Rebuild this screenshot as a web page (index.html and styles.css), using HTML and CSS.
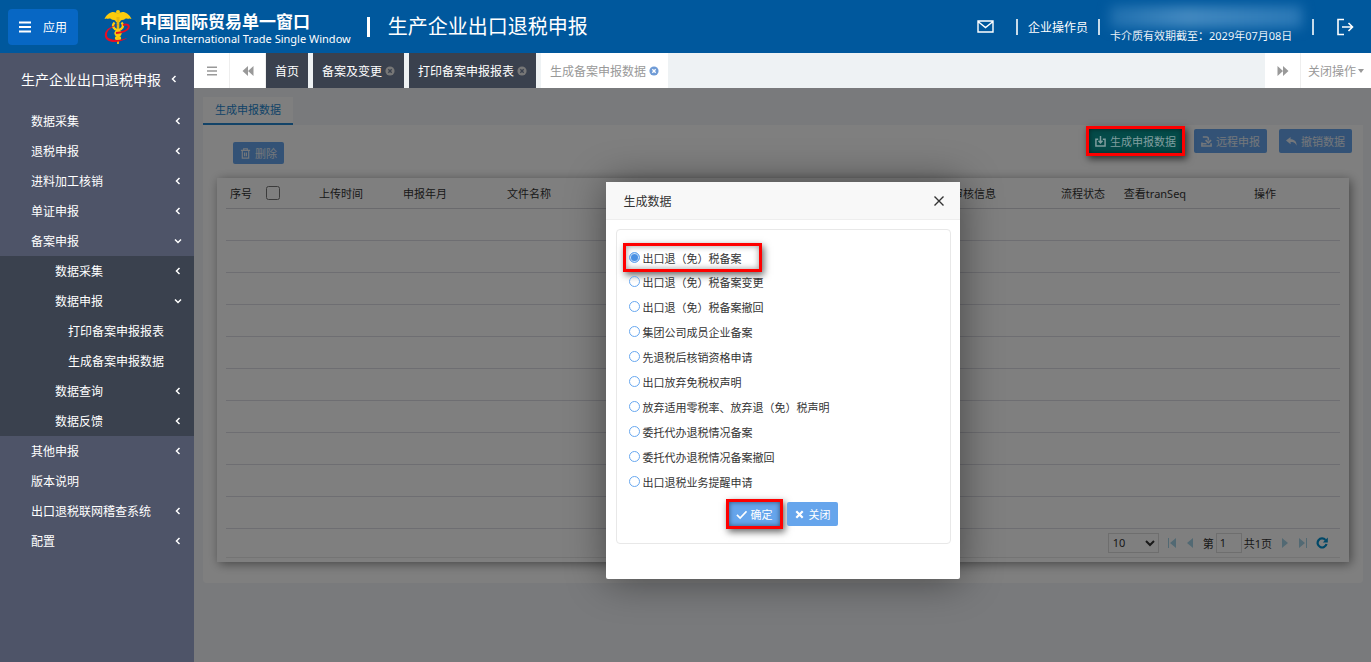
FILE: index.html
```html
<!DOCTYPE html>
<html lang="zh-CN">
<head>
  <title>生产企业出口退税申报</title>
  <meta charset="UTF-8">
  <link rel="stylesheet" href="styles.css">
</head>
<body>
  <!-- Icon sprite -->
  <svg class="sprite" aria-hidden="true">
    <symbol id="i-left" viewBox="0 0 8 8"><path d="M5.5 1 2.5 4l3 3" fill="none" stroke="currentColor" stroke-width="1.5"/></symbol>
    <symbol id="i-down" viewBox="0 0 8 8"><path d="M1 2.5l3 3 3-3" fill="none" stroke="currentColor" stroke-width="1.5"/></symbol>
    <symbol id="i-bars" viewBox="0 0 12 12"><path d="M0 1.5h12M0 6h12M0 10.5h12" stroke="currentColor" stroke-width="1.8"/></symbol>
    <symbol id="i-back" viewBox="0 0 12 12"><path d="M6 1v10L.5 6zM11.500 1v10L6 6z" fill="currentColor"/></symbol>
    <symbol id="i-forward" viewBox="0 0 12 12"><path d="M.5 1v10L6 6zM6 1v10l5.500-5z" fill="currentColor"/></symbol>
    <symbol id="i-close" viewBox="0 0 12 12"><circle cx="6" cy="6" r="5.500" fill="currentColor"/><path d="M4 4l4 4M8 4 4 8" stroke="var(--cross)" stroke-width="1.6"/></symbol>
  </svg>

  <header class="header">
    <button class="app-btn"><svg class="icon-m"><use href="#i-bars"/></svg>应用</button>
    <a class="brand" href="#">
      <svg class="logo" viewBox="0 0 28 36" aria-hidden="true">
        <circle cx="14" cy="3" r="2" fill="#fccb0c"/>
        <path d="M14 5C11 1.500 4 2 .5 10c2-1 3-.5 3.500 0 1.500-.8 3-.5 4 .8 2-.3 3.500.5 4 2.200h4c.5-1.700 2-2.500 4-2.200 1-1.300 2.500-1.600 4-.8.5-.5 1.500-1 3.500 0C24 2 17 1.500 14 5z" fill="#fccb0c"/>
        <path d="M12.500 8h3l-.6 27h-1.800z" fill="#e8b80e"/>
        <path d="M10.500 13.500c-2 2-2 5 .5 6.500s5.500 2 5.500 4.500-4.500 2.500-4.500 4.500 2 2 2.500 3M17.500 13.500c2 2 2 5-.5 6.500s-5.500 2-5.500 4.500 4.500 2.500 4.500 4.500-2 2-2.500 3" fill="none" stroke="#fccb0c" stroke-width="2.400"/>
        <path d="M19 16c4-1.500 6.500 0 5.500 2.800C23 22 18 23.500 12 24" fill="none" stroke="#e60d24" stroke-width="2"/>
        <path d="M15 15.500C8 16.500 1 20 .8 26c-.1 5 5 7.500 11 7 5-.4 8.500-2 11.500-4-5 1.600-9 2.300-13 1.800C5 30 2.500 28.500 3 25c.5-4 5-7.500 12-9.500z" fill="#e60d24"/>
      </svg>
      <span class="brand-text">
        <strong>中国国际贸易单一窗口</strong>
        <span>China International Trade Single Window</span>
      </span>
    </a>
    <i class="bar bar-big"></i>
    <h1>生产企业出口退税申报</h1>
    <div class="user">
      <a href="#" aria-label="消息"><svg class="icon-mail" viewBox="0 0 17 13"><path d="M1 1h15v11H1zM1 1.500 8.500 7.500 16 1.500" fill="none" stroke="currentColor" stroke-width="1.400"/></svg></a>
      <i class="bar bar-mail"></i>
      <span class="role">企业操作员</span>
      <i class="bar"></i>
      <div class="card-info">
        <div class="masked"></div>
        <span>卡介质有效期截至：2029年07月08日</span>
      </div>
      <i class="bar"></i>
      <a class="logout" href="#" aria-label="退出"><svg class="icon-out" viewBox="0 0 18 18"><path d="M8 1.500H2v15h6M6 9h10M12.500 5l4 4-4 4" fill="none" stroke="currentColor" stroke-width="1.600"/></svg></a>
    </div>
  </header>

  <div class="layout">
    <nav class="sidebar">
      <a class="side-title" href="#">生产企业出口退税申报<svg class="chev"><use href="#i-left"/></svg></a>
      <a href="#">数据采集<svg class="chev"><use href="#i-left"/></svg></a>
      <a href="#">退税申报<svg class="chev"><use href="#i-left"/></svg></a>
      <a href="#">进料加工核销<svg class="chev"><use href="#i-left"/></svg></a>
      <a href="#">单证申报<svg class="chev"><use href="#i-left"/></svg></a>
      <a href="#">备案申报<svg class="chev"><use href="#i-down"/></svg></a>
      <div class="submenu">
        <a href="#">数据采集<svg class="chev"><use href="#i-left"/></svg></a>
        <a href="#">数据申报<svg class="chev"><use href="#i-down"/></svg></a>
        <a class="leaf" href="#">打印备案申报报表</a>
        <a class="leaf" href="#">生成备案申报数据</a>
        <a href="#">数据查询<svg class="chev"><use href="#i-left"/></svg></a>
        <a href="#">数据反馈<svg class="chev"><use href="#i-left"/></svg></a>
      </div>
      <a href="#">其他申报<svg class="chev"><use href="#i-left"/></svg></a>
      <a href="#">版本说明</a>
      <a href="#">出口退税联网稽查系统<svg class="chev"><use href="#i-left"/></svg></a>
      <a href="#">配置<svg class="chev"><use href="#i-left"/></svg></a>
    </nav>

    <main class="main">
      <div class="tabbar">
        <button class="tab-tool" aria-label="收起菜单"><svg class="icon-s"><use href="#i-bars"/></svg></button>
        <button class="tab-tool" aria-label="向左"><svg class="icon-m"><use href="#i-back"/></svg></button>
        <div class="tabs">
          <a href="#">首页</a>
          <a href="#">备案及变更<svg class="icon-x"><use href="#i-close"/></svg></a>
          <a href="#">打印备案申报报表<svg class="icon-x"><use href="#i-close"/></svg></a>
          <a class="active" href="#">生成备案申报数据<svg class="icon-x"><use href="#i-close"/></svg></a>
        </div>
        <button class="tab-tool" aria-label="向右"><svg class="icon-m"><use href="#i-forward"/></svg></button>
        <button class="tab-tool tab-ops">关闭操作<i class="caret"></i></button>
      </div>

      <div class="content">
        <div class="inner-tabs"><a href="#">生成申报数据</a></div>
        <section class="panel">
          <div class="toolbar">
            <button class="btn btn-delete"><svg class="icon-b" viewBox="0 0 12 12"><path d="M1 2.500h10M4 2V.8h4V2M2.500 3v8h7V3M5 5v4M7 5v4" fill="none" stroke="currentColor" stroke-width="1.300"/></svg>删除</button>
            <div class="toolbar-right">
              <button class="btn btn-dark marked"><svg class="icon-b" viewBox="0 0 12 12"><path d="M3.500 3.500H1v7.500h10V3.500H8.500M6 0v7M3.800 5.200 6 7.500 8.200 5.200" fill="none" stroke="currentColor" stroke-width="1.600"/></svg>生成申报数据</button>
              <button class="btn"><svg class="icon-b" viewBox="0 0 12 12"><path d="M2 1h4c1.500 0 2 .8 2 2v2M5 4.500 8 7.500l3-3M1 7v4h10V8M1 8.500h5" fill="none" stroke="currentColor" stroke-width="1.700"/></svg>远程申报</button>
              <button class="btn"><svg class="icon-b" viewBox="0 0 12 12"><path d="M5 1 0 5l5 4V6.500c3 0 5 .5 6.500 4C12 6 9 3.500 5 3.500z" fill="currentColor"/></svg>撤销数据</button>
            </div>
          </div>

          <div class="grid-card">
            <table>
              <colgroup>
                <col class="c-no"><col class="c-check"><col class="c-time"><col class="c-month"><col class="c-file"><col><col class="c-audit"><col class="c-state"><col class="c-seq"><col class="c-op">
              </colgroup>
              <thead>
                <tr>
                  <th>序号</th>
                  <th><input type="checkbox" aria-label="全选"></th>
                  <th>上传时间</th>
                  <th>申报年月</th>
                  <th>文件名称</th>
                  <th></th>
                  <th>审核信息</th>
                  <th>流程状态</th>
                  <th>查看tranSeq</th>
                  <th>操作</th>
                </tr>
              </thead>
              <tbody>
                <tr><td colspan="10"></td></tr>
                <tr><td colspan="10"></td></tr>
                <tr><td colspan="10"></td></tr>
                <tr><td colspan="10"></td></tr>
                <tr><td colspan="10"></td></tr>
                <tr><td colspan="10"></td></tr>
                <tr><td colspan="10"></td></tr>
                <tr><td colspan="10"></td></tr>
                <tr><td colspan="10"></td></tr>
                <tr><td colspan="10"></td></tr>
              </tbody>
            </table>
            <div class="pager">
              <select aria-label="每页条数"><option>10</option></select>
              <button aria-label="首页"><svg class="icon-p" viewBox="0 0 10 10"><path d="M1 0h1v10H1zM9 0v10L3 5z" fill="currentColor"/></svg></button>
              <button aria-label="上一页"><svg class="icon-p" viewBox="0 0 10 10"><path d="M8 0v10L2 5z" fill="currentColor"/></svg></button>
              <label class="page-no">第<input type="text" value="1"></label>
              <span class="page-total">共1页</span>
              <button aria-label="下一页"><svg class="icon-p" viewBox="0 0 10 10"><path d="M2 0v10l6-5z" fill="currentColor"/></svg></button>
              <button aria-label="末页"><svg class="icon-p" viewBox="0 0 10 10"><path d="M1 0v10l6-5zM8 0h1v10H8z" fill="currentColor"/></svg></button>
              <button class="refresh" aria-label="刷新"><svg class="icon-m" viewBox="0 0 12 12"><path d="M9.500 3A4.500 4.500 0 1 0 10.500 7" fill="none" stroke="currentColor" stroke-width="2.200"/><path d="M11.800.5v5h-5z" fill="currentColor"/></svg></button>
            </div>
          </div>
        </section>

        <!-- Dialog -->
        <div class="shade"></div>
        <div class="dialog-wrap">
          <div class="dialog" role="dialog" aria-labelledby="dialogTitle">
            <div class="dialog-head">
              <h2 id="dialogTitle">生成数据</h2>
              <button class="dialog-close" aria-label="关闭窗口"><svg class="icon-m" viewBox="0 0 12 12"><path d="M1.500 1.500l9 9M10.500 1.500l-9 9" stroke="currentColor" stroke-width="1.400"/></svg></button>
            </div>
            <form class="dialog-body">
              <label class="marked-option"><input type="radio" name="kind" checked>出口退（免）税备案</label>
              <label><input type="radio" name="kind">出口退（免）税备案变更</label>
              <label><input type="radio" name="kind">出口退（免）税备案撤回</label>
              <label><input type="radio" name="kind">集团公司成员企业备案</label>
              <label><input type="radio" name="kind">先退税后核销资格申请</label>
              <label><input type="radio" name="kind">出口放弃免税权声明</label>
              <label><input type="radio" name="kind">放弃适用零税率、放弃退（免）税声明</label>
              <label><input type="radio" name="kind">委托代办退税情况备案</label>
              <label><input type="radio" name="kind">委托代办退税情况备案撤回</label>
              <label><input type="radio" name="kind">出口退税业务提醒申请</label>
              <div class="dialog-actions">
                <button type="button" class="btn marked"><svg class="icon-b" viewBox="0 0 12 12"><path d="M1 6.500 4.500 10 11.500 2.500" fill="none" stroke="currentColor" stroke-width="1.800"/></svg>确定</button>
                <button type="button" class="btn"><svg class="icon-b" viewBox="0 0 12 12"><path d="M2.500 2.500l7 7M9.500 2.500l-7 7" stroke="currentColor" stroke-width="2.400"/></svg>关闭</button>
              </div>
            </form>
          </div>
        </div>
      </div>
    </main>
  </div>
</body>
</html>
```
FILE: styles.css
```css
:root {
  --header-bg: #00589d;
  --app-bg: #0767c4;
  --side-bg: #4e5468;
  --side-dark: #3a414e;
  --btn-color: #66a5ec;
  --mark: #fe0000;
  --cross: #fff;
}
* { box-sizing: border-box; }
body {
  display: flex;
  flex-direction: column;
  min-height: 100vh;
  margin: 0;
  font-family: "Noto Sans", "Noto Sans CJK SC", sans-serif;
  font-size: 11px;
  color: #333;
}
a { color: inherit; text-decoration: none; }
button, input, select { font-family: inherit; font-size: inherit; color: inherit; }
button { border: 0; padding: 0; background: none; cursor: pointer; }
svg { display: block; flex: none; }
.sprite { position: absolute; width: 0; height: 0; }
.icon-m { width: 12px; height: 12px; }
.icon-s { width: 12px; height: 10px; }
.icon-b { width: 11px; height: 11px; }
.icon-x { width: 10px; height: 10px; }

/* Header */
.header { display: flex; align-items: center; height: 53px; padding: 0 17px 0 8px; background: var(--header-bg); color: #fff; }
.app-btn { display: flex; align-items: center; gap: 12px; height: 36px; padding: 0 11px; border-radius: 4px; background: var(--app-bg); font-size: 12px; }
.brand { display: flex; align-items: center; gap: 8px; margin-left: 26px; }
.logo { width: 28px; height: 36px; }
.brand-text { display: flex; flex-direction: column; font-size: 11px; line-height: 14px; }
.brand-text strong { margin-top: 4px; font-size: 17px; line-height: 21px; }
.bar { width: 2px; height: 16px; background: #c9dcea; }
.bar-big { width: 3px; height: 20px; margin: 0 18px 0 16px; background: #fff; }
h1 { margin: 0; font-size: 20px; font-weight: 400; line-height: 28px; }
.user { display: flex; align-items: center; gap: 10px; margin-left: auto; font-size: 12px; }
.icon-mail { width: 17px; height: 13px; }
.icon-out { width: 18px; height: 18px; }
.bar-mail { margin-left: 12px; }
.card-info { display: flex; flex-direction: column; width: 192px; margin-top: -4px; font-size: 11px; line-height: 16px; }
.masked { height: 22px; background: linear-gradient(90deg, #1f6fae, #4389c0 40%, #2a78b6); filter: blur(6px); }
.logout { margin-left: 12px; }

/* Sidebar */
.layout { display: flex; flex: 1; }
.sidebar { width: 194px; background: var(--side-bg); color: #fff; font-size: 12px; }
.sidebar a { display: flex; align-items: center; justify-content: space-between; height: 30px; padding: 0 12px 0 31px; }
.sidebar .side-title { height: 53px; padding: 0 16px 2px 21px; font-size: 14px; }
.chev { width: 8px; height: 8px; }
.submenu { background: var(--side-dark); }
.sidebar .submenu a { padding-left: 55px; }
.sidebar .submenu .leaf { padding-left: 68px; }

/* Tab bar */
.main { display: flex; flex-direction: column; flex: 1; min-width: 0; }
.tabbar { display: flex; height: 35px; background: #eef2f4; color: #999; font-size: 12px; }
.tab-tool { display: flex; align-items: center; justify-content: center; width: 36px; border-right: 1px solid #eee; background: #fff; }
.tab-ops { width: 70px; border: 0; }
.caret { margin-left: 2px; border: 3px solid transparent; border-top: 4px solid #999; border-bottom: 0; }
.tabs { display: flex; flex: 1; gap: 5px; }
.tabs a { display: flex; align-items: center; gap: 3px; padding: 0 9px; background: var(--side-dark); color: #fff; }
.tabs svg { color: #777; --cross: #3a414e; }
.tabs .active { background: #fff; color: #999; }
.tabs .active svg { color: #6f9bd6; --cross: #fff; }

/* Content */
.content { position: relative; flex: 1; padding: 9px 8px 20px 9px; background: #f3f5f9; }
.inner-tabs { display: flex; }
.inner-tabs a { padding: 4px 12px; border-bottom: 2px solid #2487d0; background: #fff; color: #2487d0; line-height: 18px; }
.panel { padding: 4px 14px 21px; border-radius: 0 0 4px 4px; background: #fff; }
.toolbar { display: flex; align-items: flex-start; justify-content: space-between; height: 49px; }
.toolbar-right { display: flex; gap: 12px; margin-right: -3px; }
.btn { display: flex; align-items: center; gap: 4px; height: 24px; padding: 0 7px; border-radius: 2px; background: var(--btn-color); color: #fff; }
.btn-delete { height: 22px; margin: 13px 0 0 16px; }
.toolbar .btn { color: #e8eef6; }
.marked { box-shadow: 0 0 0 3px var(--mark), 2px 3px 7px 3px rgba(0, 0, 0, .6), inset 0 0 5px rgba(0, 0, 0, .5); border-radius: 0; }
.toolbar .btn-dark { position: relative; z-index: 2; padding: 0 6px; background: #044b49; color: #809e9f; }
.grid-card { padding: 0 9px 4px; background: #fff; box-shadow: 2px 2px 10px rgba(0, 0, 0, .45); }
table { width: 100%; border-collapse: collapse; table-layout: fixed; }
th { height: 30px; padding: 0; border-bottom: 1px solid #d4d4da; font-weight: 400; white-space: nowrap; }
td { height: 32px; padding: 0; border-bottom: 1px solid #dcdce4; }
th input { display: block; width: 14px; height: 14px; margin: 0 auto; }
.c-no { width: 30px; }
.c-check { width: 34px; }
.c-time { width: 102px; }
.c-month { width: 66px; }
.c-file { width: 142px; }
.c-audit { width: 144px; }
.c-state { width: 74px; }
.c-seq { width: 70px; }
.c-op { width: 150px; }
.pager { display: flex; align-items: center; justify-content: flex-end; gap: 8px; height: 29px; padding-right: 12px; border-bottom: 1px solid #e8e8e8; }
.pager select { width: 51px; height: 20px; border: 1px solid #ddd; background: #fff; }
.pager button { color: #a4d3e6; }
.page-no { display: flex; align-items: center; gap: 2px; }
.page-no input { width: 26px; height: 20px; padding: 0 3px; border: 1px solid #ddd; }
.page-total { margin-left: -6px; }
.icon-p { width: 10px; height: 10px; }
.pager .refresh { color: #0090d0; }

/* Dialog */
.shade { position: absolute; inset: 0; z-index: 1; background: rgba(0, 0, 0, .5); }
.dialog-wrap { position: absolute; inset: 0; z-index: 3; display: flex; align-items: flex-start; justify-content: center; padding-top: 94px; pointer-events: none; }
.dialog { width: 354px; padding-bottom: 35px; background: #fff; border-radius: 2px; box-shadow: 1px 1px 40px rgba(0, 0, 0, .45); pointer-events: auto; }
.dialog-head { display: flex; align-items: center; justify-content: space-between; height: 38px; padding: 0 15px 0 18px; border-bottom: 1px solid #eee; background: #f8f8f8; }
h2 { margin: 0; font-size: 12px; font-weight: 400; }
.dialog-body { display: flex; flex-direction: column; align-items: flex-start; margin: 9px 9px 0 10px; padding: 14px 9px 17px; border: 1px solid #e8e8e8; border-radius: 4px; }
.dialog-body label { display: flex; align-items: center; gap: 3px; height: 25px; padding: 0 3px; }
.dialog-body .marked-option { width: 133px; height: 23px; margin-top: 2px; box-shadow: 0 0 0 3px var(--mark), 2px 3px 7px 3px rgba(0, 0, 0, .6), inset 0 0 6px rgba(0, 0, 0, .4); }
.dialog-body input { width: 11px; height: 11px; margin: 0; border: 1px solid #68a8f0; border-radius: 50%; appearance: none; }
.dialog-body input:checked { background: #4a90e2; box-shadow: inset 0 0 0 1px #cfe2f8; }
.dialog-actions { display: flex; align-self: center; gap: 7px; margin-top: 8px; }
```
